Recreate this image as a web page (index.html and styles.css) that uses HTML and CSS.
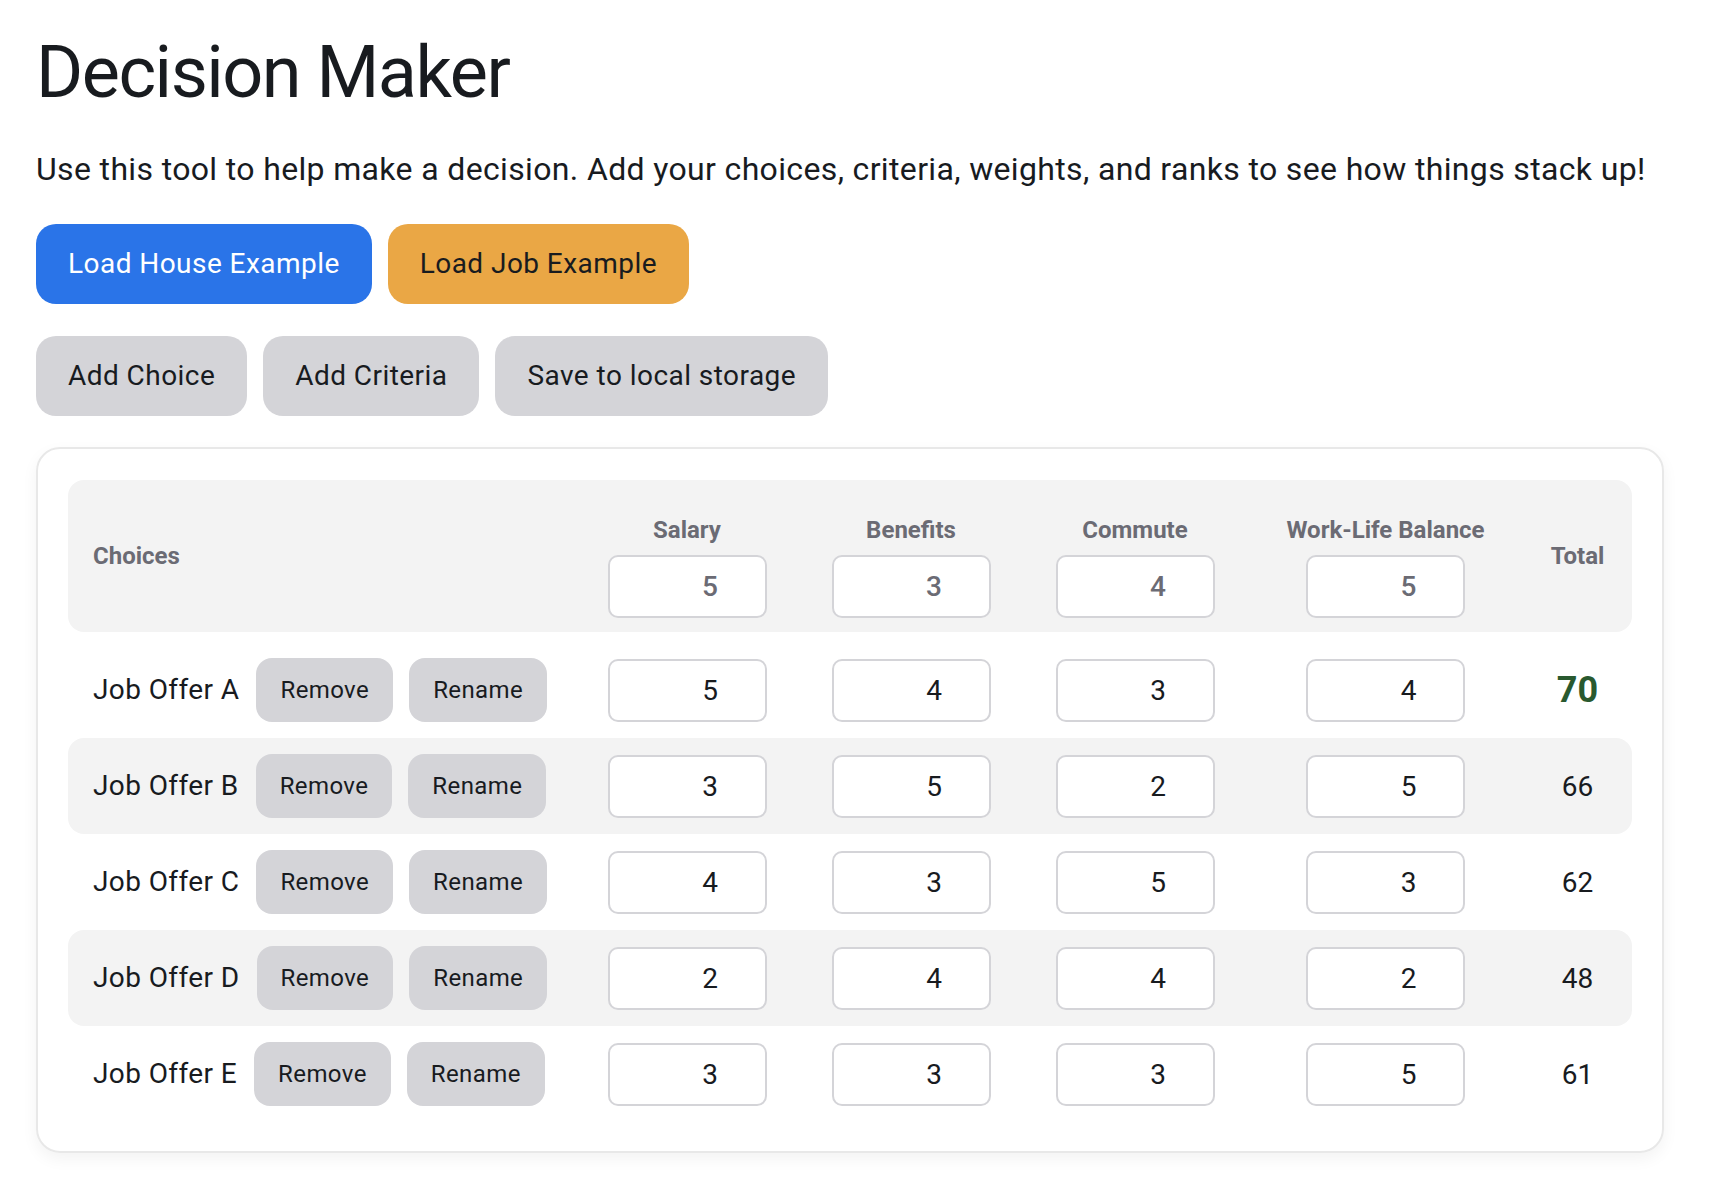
FILE: index.html
```html
<!DOCTYPE html>
<html lang="en">
<head>
<meta charset="utf-8">
<title>Decision Maker</title>
<link rel="stylesheet" href="styles.css">
</head>
<body>
<main class="page">
  <h1 class="title">Decision Maker</h1>
  <p class="intro">Use this tool to help make a decision. Add your choices, criteria, weights, and ranks to see how things stack up!</p>

  <div class="btn-row">
    <button class="btn btn-blue">Load House Example</button>
    <button class="btn btn-orange">Load Job Example</button>
  </div>
  <div class="btn-row">
    <button class="btn btn-gray">Add Choice</button>
    <button class="btn btn-gray">Add Criteria</button>
    <button class="btn btn-gray">Save to local storage</button>
  </div>

  <section class="card">
    <div class="trow head">
      <div class="cell first head-label">Choices</div>
      <div class="cell crit"><span class="crit-name">Salary</span><input class="num num-head" type="number" value="5"></div>
      <div class="cell crit"><span class="crit-name">Benefits</span><input class="num num-head" type="number" value="3"></div>
      <div class="cell crit"><span class="crit-name">Commute</span><input class="num num-head" type="number" value="4"></div>
      <div class="cell crit"><span class="crit-name">Work-Life Balance</span><input class="num num-head" type="number" value="5"></div>
      <div class="cell total head-label">Total</div>
    </div>

    <div class="trow body first-body">
      <div class="cell first"><span class="choice-name">Job Offer A</span><button class="btn-sm">Remove</button><button class="btn-sm">Rename</button></div>
      <div class="cell"><input class="num" type="number" value="5"></div>
      <div class="cell"><input class="num" type="number" value="4"></div>
      <div class="cell"><input class="num" type="number" value="3"></div>
      <div class="cell"><input class="num" type="number" value="4"></div>
      <div class="cell total best">70</div>
    </div>

    <div class="trow body stripe">
      <div class="cell first"><span class="choice-name">Job Offer B</span><button class="btn-sm">Remove</button><button class="btn-sm">Rename</button></div>
      <div class="cell"><input class="num" type="number" value="3"></div>
      <div class="cell"><input class="num" type="number" value="5"></div>
      <div class="cell"><input class="num" type="number" value="2"></div>
      <div class="cell"><input class="num" type="number" value="5"></div>
      <div class="cell total">66</div>
    </div>

    <div class="trow body">
      <div class="cell first"><span class="choice-name">Job Offer C</span><button class="btn-sm">Remove</button><button class="btn-sm">Rename</button></div>
      <div class="cell"><input class="num" type="number" value="4"></div>
      <div class="cell"><input class="num" type="number" value="3"></div>
      <div class="cell"><input class="num" type="number" value="5"></div>
      <div class="cell"><input class="num" type="number" value="3"></div>
      <div class="cell total">62</div>
    </div>

    <div class="trow body stripe">
      <div class="cell first"><span class="choice-name">Job Offer D</span><button class="btn-sm">Remove</button><button class="btn-sm">Rename</button></div>
      <div class="cell"><input class="num" type="number" value="2"></div>
      <div class="cell"><input class="num" type="number" value="4"></div>
      <div class="cell"><input class="num" type="number" value="4"></div>
      <div class="cell"><input class="num" type="number" value="2"></div>
      <div class="cell total">48</div>
    </div>

    <div class="trow body">
      <div class="cell first"><span class="choice-name">Job Offer E</span><button class="btn-sm">Remove</button><button class="btn-sm">Rename</button></div>
      <div class="cell"><input class="num" type="number" value="3"></div>
      <div class="cell"><input class="num" type="number" value="3"></div>
      <div class="cell"><input class="num" type="number" value="3"></div>
      <div class="cell"><input class="num" type="number" value="5"></div>
      <div class="cell total">61</div>
    </div>
  </section>
</main>
</body>
</html>
```

FILE: styles.css
```css
* { box-sizing: border-box; }

body {
  margin: 0;
  background: #ffffff;
  color: #181b1f;
  font-family: Roboto, "Liberation Sans", sans-serif;
}

.page {
  padding: 0 48px 40px 36px;
}

.title {
  font-size: 72px;
  line-height: 80px;
  font-weight: 400;
  letter-spacing: -1.5px;
  margin: 33px 0 0;
}

.intro {
  font-size: 32px;
  line-height: 48px;
  letter-spacing: 0.35px;
  margin: 32px 0 0;
  white-space: nowrap;
}

.btn-row {
  display: flex;
  gap: 16px;
  margin-top: 31px;
}
.btn-row + .btn-row { margin-top: 32px; }

.btn {
  font-family: inherit;
  font-size: 28px;
  line-height: 40px;
  letter-spacing: 0.45px;
  padding: 20px 32px;
  border: 0;
  border-radius: 20px;
  color: #181b1f;
  cursor: pointer;
}
.btn-blue { background: #2a74e8; color: #ffffff; }
.btn-orange { background: #eaa745; color: #181b1f; }
.btn-gray { background: #d4d4d8; }

.card {
  margin-top: 31px;
  border: 2px solid #e8e8e8;
  border-radius: 24px;
  padding: 31px 30px 29px;
  box-shadow: 0 6px 16px rgba(0, 0, 0, 0.05);
}

.trow {
  display: grid;
  grid-template-columns: 507px 224px 224px 224px 277px 107px;
  align-items: center;
  border-radius: 16px;
}

.head {
  background: #f3f3f3;
  height: 152px;
  align-items: stretch;
}

.head-label {
  align-self: center;
  font-size: 24px;
  font-weight: 700;
  color: #6b6b74;
}

.crit {
  display: flex;
  flex-direction: column;
  align-items: center;
  padding-top: 20px;
}

.crit-name {
  font-size: 24px;
  line-height: 32px;
  font-weight: 700;
  color: #6b6b74;
  margin-bottom: 9px;
  white-space: nowrap;
}

.body { height: 96px; }
.first-body { margin-top: 10px; }
.stripe { background: #f3f3f3; }

.cell { display: flex; justify-content: center; }

.first {
  justify-content: flex-start;
  align-items: center;
  padding-left: 25px;
}

.choice-name {
  font-size: 28px;
  line-height: 40px;
  letter-spacing: 0.4px;
  margin-right: 1px;
}

.btn-sm {
  font-family: inherit;
  font-size: 24px;
  line-height: 32px;
  letter-spacing: 0.4px;
  height: 64px;
  padding: 16px 24px;
  margin-left: 16px;
  border: 0;
  border-radius: 16px;
  background: #d4d4d8;
  color: #181b1f;
  cursor: pointer;
}

.num {
  width: 159px;
  height: 63px;
  border: 2px solid #d4d4d8;
  border-radius: 10px;
  background: #ffffff;
  font-family: inherit;
  font-size: 28px;
  color: #181b1f;
  text-align: center;
  padding: 0 0 0 46px;
  -moz-appearance: textfield;
}
.num::-webkit-inner-spin-button,
.num::-webkit-outer-spin-button {
  -webkit-appearance: none;
  margin: 0;
}
.num-head {
  color: #6b6b74;
  font-weight: 500;
}

.total {
  font-size: 28px;
  text-align: center;
}
.head-label.total { font-size: 24px; }

.best {
  font-size: 36px;
  font-weight: 700;
  color: #29592f;
}
```
